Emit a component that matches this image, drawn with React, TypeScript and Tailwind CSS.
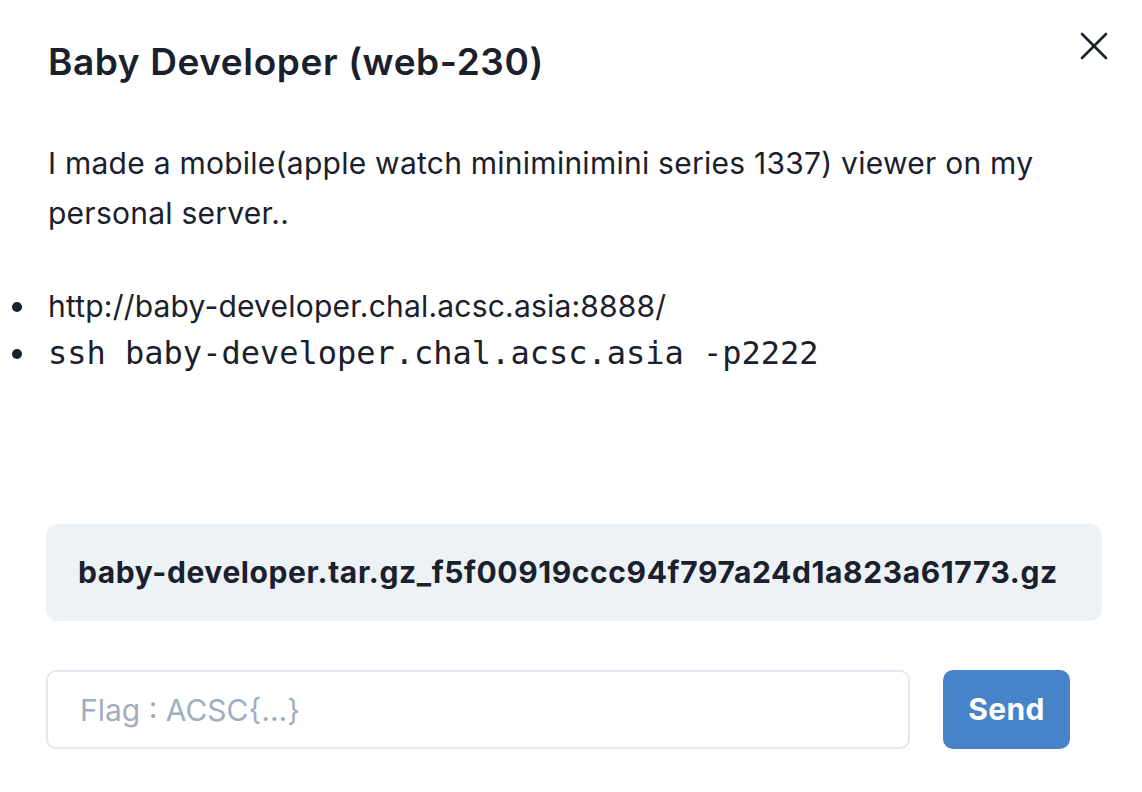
import React from "react";

export default function App() {
  return (
    <div className="w-[1142px] h-[792px] bg-white text-[#1a202c] font-['Inter',sans-serif] relative overflow-hidden">
      <button className="absolute left-[1078px] top-[30px] w-[32px] h-[32px] flex items-center justify-center text-[#1a202c]">
        <svg width="30" height="30" viewBox="0 0 30 30" fill="none" stroke="currentColor" strokeWidth="2.6" strokeLinecap="round">
          <path d="M3 3 L27 27 M27 3 L3 27" />
        </svg>
      </button>
      <div className="pl-[48px] pr-[40px]">
        <h1 className="pt-[37px] text-[37px] leading-[50px] font-semibold tracking-[0.6px]">Baby Developer (web-230)</h1>
        <p className="mt-[51px] text-[30px] leading-[50px] tracking-[0.25px] pr-[40px]">
          I made a mobile(apple watch miniminimini series 1337) viewer on my personal server..
        </p>
        <ul className="mt-[45px] text-[30px] leading-[47px]">
          <li className="flex items-center ml-[-48px]">
            <span className="w-[48px] flex justify-center pr-[14px]">
              <span className="block w-[10px] h-[10px] rounded-full bg-[#1a202c]" />
            </span>
            <span className="tracking-[0.2px]">http://baby-developer.chal.acsc.asia:8888/</span>
          </li>
          <li className="flex items-center ml-[-48px]">
            <span className="w-[48px] flex justify-center pr-[14px]">
              <span className="block w-[10px] h-[10px] rounded-full bg-[#1a202c]" />
            </span>
            <span className="font-['DejaVu_Sans_Mono',monospace] text-[32px]">ssh baby-developer.chal.acsc.asia -p2222</span>
          </li>
        </ul>
      </div>
      <div className="ml-[46px] mr-[40px] mt-[147px] h-[97px] rounded-[12px] bg-[#edf2f7] flex items-center pl-[32px]">
        <span className="text-[30px] font-bold tracking-[0.6px]">baby-developer.tar.gz_f5f00919ccc94f797a24d1a823a61773.gz</span>
      </div>
      <div className="ml-[46px] mt-[49px] flex gap-[33px]">
        <input
          className="w-[864px] h-[79px] rounded-[10px] border-2 border-[#e2e8f0] pl-[32px] text-[30px] placeholder-[#a0aec0] outline-none"
          placeholder="Flag : ACSC{...}"
        />
        <button className="w-[127px] h-[79px] rounded-[10px] bg-[#4783c8] text-white text-[30px] font-bold tracking-[0.4px]">Send</button>
      </div>
    </div>
  );
}
